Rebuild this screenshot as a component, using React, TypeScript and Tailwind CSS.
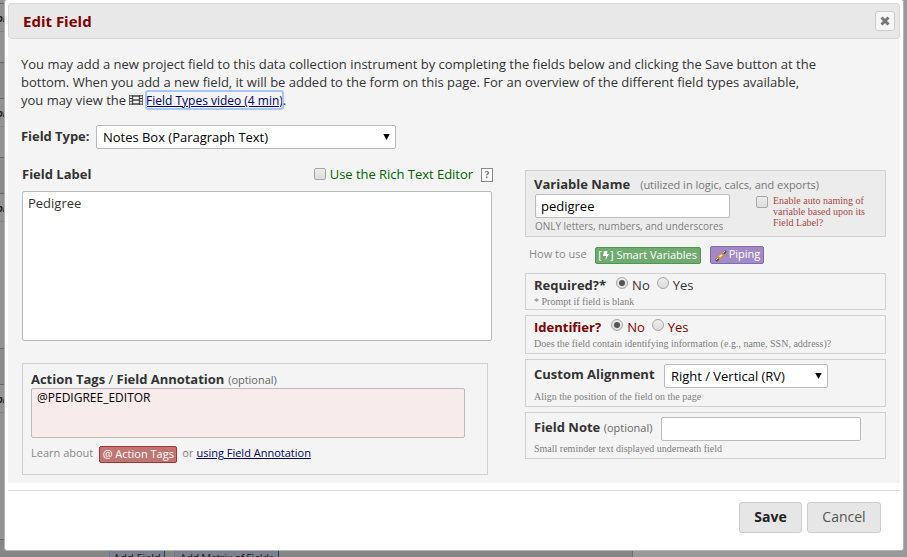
import React from "react";

const Radio = ({ on }: { on?: boolean }) => (
  <span className="flex h-3 w-3 shrink-0 items-center justify-center rounded-full border border-[#a6a6a6] bg-gradient-to-b from-[#ececec] to-[#dcdcdc]">
    {on && <span className="h-1.5 w-1.5 rounded-full bg-[#555]" />}
  </span>
);

const Check = () => (
  <span className="h-3 w-3 shrink-0 rounded-[2px] border border-[#a6a6a6] bg-gradient-to-b from-[#ededed] to-[#dcdcdc]" />
);

const Arrow = () => (
  <svg width="7" height="6" viewBox="0 0 7 6" className="shrink-0">
    <path d="M0.3 0H6.7L3.5 6Z" fill="#000" />
  </svg>
);

const Film = () => (
  <svg width="14" height="10" viewBox="0 0 14 10" className="mx-[3px] shrink-0" fill="none" stroke="#444">
    <path d="M3.5 0v10M10.5 0v10M3.5 1h7M3.5 5h7M3.5 9h7" strokeWidth="1.3" />
    <path d="M.5 0v10M13.5 0v10" strokeWidth=".8" />
    <path d="M.5 .8h3M.5 3.5h3M.5 6.3h3M.5 9.2h3M10.5 .8h3M10.5 3.5h3M10.5 6.3h3M10.5 9.2h3" strokeWidth="1" />
  </svg>
);

const Serif = "font-['Liberation_Serif',serif] text-[10px] leading-[11px] text-[#808080]";

const Backdrop = () => (
  <div className="absolute inset-0 flex overflow-hidden bg-[#868686]">
    <div className="flex h-full w-1 shrink-0 flex-col overflow-hidden bg-[#929292] text-[10px] font-bold italic text-[#222]">
      <div className="h-[4px] border-b border-[#686868]" />
      <div className="h-[28px] border-b border-[#828282] pt-[5px]"><span className="-ml-[3px]">or</span></div>
      <div className="h-[31px] border-b border-[#686868]" />
      <div className="h-[36px] border-b border-[#686868] bg-[#8a8a8a]" />
      <div className="h-[28px] border-b border-[#828282] pt-[5px]"><span className="-ml-[3px]">or</span></div>
      <div className="h-[31px] border-b border-[#686868]" />
      <div className="h-[36px] border-b border-[#686868] bg-[#8a8a8a]" />
      <div className="h-[28px] border-b border-[#828282] pt-[5px]"><span className="-ml-[3px]">or</span></div>
      <div className="h-[127px] border-b border-[#686868]" />
      <div className="h-[36px] border-b border-[#686868] bg-[#8a8a8a]" />
      <div className="h-[28px] border-b border-[#828282] pt-[5px]"><span className="-ml-[3px]">or</span></div>
      <div className="h-[127px] border-b border-[#686868]" />
      <div className="flex-1 bg-[#868686]" />
    </div>
    <div className="flex h-full w-[629px] shrink-0 items-start gap-[9px] border-r border-[#6d6d6d] pl-[105px] pt-[543px] text-[11px] leading-[29px] text-[#202020]">
      <div className="h-8 w-[56px] border-x border-l-[#6a74a0] border-r-[#1f3878] bg-[#7c8090] text-center whitespace-nowrap">Add Field</div>
      <div className="h-8 w-[105px] border-x border-l-[#6a74a0] border-r-[#1f3878] bg-[#7c8090] text-center tracking-[-0.5px] whitespace-nowrap"><span className="tracking-[-0.5px]"><span className="tracking-[-0.4px]">Add Matrix of Fields</span></span></div>
    </div>
    <div className="flex-1 bg-[#999]" />
  </div>
);

const Left = () => (
  <div className="w-[470px] shrink-0">
    <div className="flex h-[27px] items-center pb-[5px]">
      <b>Field Label</b>
      <span className="ml-auto mr-[4px] flex"><Check /></span>
      <span className="tracking-[-0.03px] text-[#006400]">Use the Rich Text Editor</span>
      <span className="ml-2 mr-[-1px] mt-[2px] flex h-[14px] w-3 items-center justify-center border border-[#888] bg-white font-['Liberation_Serif',serif] text-[10px] font-bold leading-none text-[#666]">?</span>
    </div>
    <div className="mt-[1px] h-[150px] rounded-[2px] border border-[#bbb] bg-white px-[5px] py-[2px] leading-[18px]">Pedigree</div>
    <div className="mt-[22px] h-[112px] w-[466px] border border-[#d0d0d0] px-2">
      <div className="flex h-6 items-center gap-1 pt-[6px] whitespace-nowrap">
        <span className="tracking-[-0.03px]"><b>Action Tags</b> / <b>Field Annotation</b></span>
        <span className="pt-px text-[11px] tracking-[-0.03px] text-[#666]">(optional)</span>
      </div>
      <div className="h-[50px] w-[434px] rounded-[2px] border border-[#bbb] bg-[#f7ebeb] px-[5px] text-[12px] leading-[17px] text-black">@PEDIGREE_EDITOR</div>
      <div className="flex h-[30px] items-center text-[11px] text-[#888]">
        Learn about
        <span className="ml-[6px] mr-[5px] mt-[2px] h-[17px] w-[78px] rounded-[2px] border border-[#a83232] bg-[#c07575] text-center leading-[14px] text-white whitespace-nowrap">@ Action Tags</span>
        or
        <span className="ml-[3px] text-[#000066] underline">using Field Annotation</span>
      </div>
    </div>
  </div>
);

const Right = () => (
  <div className="w-[361px] shrink-0">
    <div className="h-[67px] border border-[#d0d0d0] bg-[#ececec] pl-2">
      <div className="flex h-[23px] items-center gap-[10px] pt-[3px]"><b>Variable Name</b><span className="pt-px text-[11px] tracking-[-0.02px] text-[#777]">(utilized in logic, calcs, and exports)</span></div>
      <div className="flex">
        <div className="w-[196px]">
          <div className="ml-px h-6 rounded-[2px] border border-[#bbb] bg-white pl-[5px] leading-[23px] text-black">pedigree</div>
          <div className="ml-px text-[10px] leading-4 tracking-[-0.03px] text-[#808080] whitespace-nowrap">ONLY letters, numbers, and underscores</div>
        </div>
        <span className="ml-[26px] mt-[2px] flex"><Check /></span>
        <div className="ml-[5px] mt-[1px] font-['Liberation_Serif',serif] text-[10px] leading-[11px] text-[#a84848] whitespace-nowrap">Enable auto naming of<br />variable based upon its<br />Field Label?</div>
      </div>
    </div>
    <div className="flex h-[36px] items-center pl-1 text-[11px] text-[#888] whitespace-nowrap">
      <span className="-mt-[2px]">How to use</span>
      <span className="ml-[8px] mt-px flex h-[17px] w-[106px] items-center justify-center rounded-[2px] border border-[#4c984c] bg-[#71aa71] pb-px text-[11px] text-white">[
        <svg width="6" height="9" viewBox="0 0 6 9" className="mx-px mt-px"><path d="M1 0H4.5L4 3H6L2.5 9L3 5H0Z" fill="#fff" /></svg>
        ]&nbsp;Smart Variables</span>
      <span className="ml-[9px] flex h-[18px] w-[54px] items-center rounded-[2px] border border-[#8268b8] bg-[#a28bc4] pb-[2px] pl-1 text-[11px] text-white">
        <svg width="12" height="12" viewBox="0 0 12 12" className="mr-[2px] mt-[3px]"><path d="M1 11L4 8M8 4L11 1" stroke="#555" strokeWidth="2.8" /><path d="M1 10L4 7M7 4L10 1" stroke="#ddd" /><path d="M3.3 8.7L8.5 3.5" stroke="#e48a20" strokeWidth="3.2" /><path d="M4.5 7L7 4.7" stroke="#ffe2a0" strokeWidth="1.7" /></svg>
        Piping</span>
    </div>
    <div className="h-[37px] border border-[#d0d0d0] pl-2">
      <div className="flex h-[22px] items-center"><b>Required?*</b><span className="ml-[10px] mb-[4px] flex"><Radio on /></span><span className="ml-[4px]">No</span><span className="ml-[7px] mb-[4px] flex"><Radio /></span><span className="ml-[4px]">Yes</span></div>
      <div className={Serif}>* Prompt if field is blank</div>
    </div>
    <div className="mt-[5px] h-[39px] border border-[#d0d0d0] pl-2">
      <div className="flex h-[22px] items-center text-[#800000]"><b>Identifier?</b><span className="ml-[10px] mb-[4px] flex"><Radio on /></span><span className="ml-[4px]">No</span><span className="ml-[7px] mb-[4px] flex"><Radio /></span><span className="ml-[4px]">Yes</span></div>
      <div className={Serif}>Does the field contain identifying information (e.g., name, SSN, address)?</div>
    </div>
    <div className="mt-[5px] h-[48px] border border-[#d0d0d0] pl-2 pt-1">
      <div className="flex h-6"><b className="w-[130px] leading-[21px]">Custom Alignment</b><div className="flex w-[164px] items-center justify-between rounded-[2px] border border-[#bbb] bg-white pl-[6px] pr-[5px] text-black"><span className="tracking-[-0.02px]">Right / Vertical (RV)</span><Arrow /></div></div>
      <div className={`${Serif} mt-[3px]`}>Align the position of the field on the page</div>
    </div>
    <div className="mt-[5px] h-[47px] border border-[#d0d0d0] pl-2 pt-1">
      <div className="flex h-6"><div className="w-[127px] leading-[21px]"><b>Field Note</b> <span className="text-[11px] text-[#666]">(optional)</span></div><div className="w-[200px] rounded-[2px] border border-[#bbb] bg-white" /></div>
      <div className={`${Serif} mt-[2px]`}>Small reminder text displayed underneath field</div>
    </div>
  </div>
);

export default function App() {
  return (
    <div className="relative h-[557px] w-[907px] overflow-hidden font-['Open_Sans',sans-serif] text-[13px] leading-[18px] text-[#333]">
      <Backdrop />
      <div className="absolute left-1 top-[-1px] h-[552px] w-[900px] rounded-[3px] border border-[#b4b4b4] bg-white px-[3px] pt-[3px]">
        <div className="flex h-9 items-center justify-between rounded-[3px] border border-[#d8d8d8] bg-[#e8e8e8] pl-[14px] pr-1">
          <b className="text-[15px] text-[#800000]">Edit Field</b>
          <span className="flex h-5 w-5 items-center justify-center rounded-[3px] border border-[#ccc] bg-[#f6f6f6]">
            <svg width="10" height="10" viewBox="0 0 10 10"><path d="M1.5 1.5L8.5 8.5M8.5 1.5L1.5 8.5" stroke="#777" strokeWidth="3" /></svg>
          </span>
        </div>
        <div className="h-[444px] bg-[#f4f4f4] pl-[13px] pt-4">
          <div className="tracking-[-0.012px] whitespace-nowrap">
            <div>You may add a new project field to this data collection instrument by completing the fields below and clicking the Save button at the</div>
            <div className="tracking-[-0.005px]">bottom. When you add a new field, it will be added to the form on this page. For an overview of the different field types available,</div>
            <div className="flex items-center">you may view the <Film /><span className="h-[18px] rounded-[2px] pt-px text-[12px] leading-[17px] tracking-[-0.01px] text-[#000066] underline outline-2 -outline-offset-1 outline-[#a5c7fe]">Field Types video (4 min)</span>.</div>
          </div>
          <div className="mt-4 flex h-6 items-center">
            <b className="-mt-[2px] w-[75px] tracking-[-0.05px] whitespace-nowrap">Field Type:</b>
            <div className="flex h-6 w-[300px] items-center justify-between rounded-[2px] border border-[#bbb] bg-white pl-[6px] pr-[5px] text-black"><span className="tracking-[-0.02px]">Notes Box (Paragraph Text)</span><Arrow /></div>
          </div>
          <div className="flex gap-[33px] pl-px pt-[15px]">
            <div className="-mt-[1px]"><Left /></div>
            <div className="mt-[6px]"><Right /></div>
          </div>
        </div>
        <div className="mt-[7px] flex justify-end gap-[5px] border-t border-[#ddd] pr-[19px] pt-[11px] text-[14px] text-[#555]">
          <span className="flex h-[31px] w-[63px] items-center justify-center rounded-[3px] border border-[#ccc] bg-[#e6e6e6] pb-[2px] font-bold text-[#222]">Save</span>
          <span className="flex h-[31px] w-[74px] items-center justify-center rounded-[3px] border border-[#ccc] bg-[#e6e6e6] pb-[2px]">Cancel</span>
        </div>
      </div>
    </div>
  );
}
